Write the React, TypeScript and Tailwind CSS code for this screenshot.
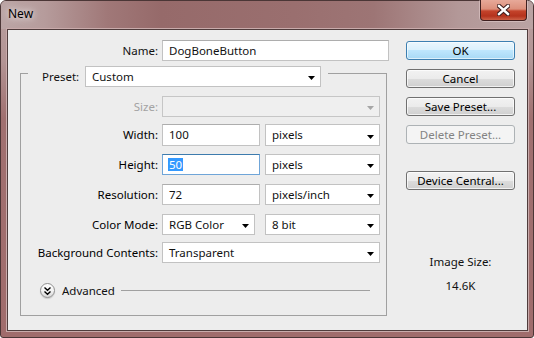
import React from "react";

function Arrow({ disabled }: { disabled?: boolean }) {
  return (
    <svg width="7" height="4" viewBox="0 0 7 4" className="mt-[3px] shrink-0">
      <polygon points="0,0 7,0 3.5,4" fill={disabled ? "#a6a6a6" : "#000"} />
    </svg>
  );
}

function TextBox({ children, className }: { children?: React.ReactNode; className: string }) {
  return (
    <div
      className={`h-full flex items-center pl-[6px] bg-white border border-[#c2c2c2] border-t-[#adadad] ${className}`}
    >
      {children}
    </div>
  );
}

function Select({
  children,
  className,
  disabled,
}: {
  children?: React.ReactNode;
  className: string;
  disabled?: boolean;
}) {
  return (
    <div
      className={`h-full flex items-center justify-between pl-[6px] pr-[5px] border ${
        disabled ? "bg-[#efefef] border-[#c6c6c6]" : "bg-white border-[#c2c2c2]"
      } ${className}`}
    >
      <span>{children}</span>
      <Arrow disabled={disabled} />
    </div>
  );
}

function Btn({ children, kind }: { children: React.ReactNode; kind?: "default" | "disabled" }) {
  const base = "h-[19px] w-[109px] rounded-[3px] border flex items-center justify-center leading-none";
  if (kind === "default")
    return (
      <div
        className={`${base} border-[#3c7fb1] bg-[linear-gradient(#eaf6fd_0%,#d9f0fc_50%,#bee6fd_50%,#a7d9f5_100%)] shadow-[inset_0_0_0_1px_rgba(255,255,255,0.6)] text-black`}
      >
        {children}
      </div>
    );
  if (kind === "disabled")
    return (
      <div className={`${base} border-[#adb2b5] bg-[#f4f4f4] text-[#838383]`}>{children}</div>
    );
  return (
    <div
      className={`${base} border-[#707070] bg-[linear-gradient(#f2f2f2_0%,#ebebeb_50%,#dddddd_50%,#cfcfcf_100%)] shadow-[inset_0_0_0_1px_rgba(255,255,255,0.7)] text-black`}
    >
      {children}
    </div>
  );
}

function Row({
  label,
  mt,
  h,
  disabled,
  children,
}: {
  label: string;
  mt: string;
  h: string;
  disabled?: boolean;
  children: React.ReactNode;
}) {
  return (
    <div className={`flex items-center ${mt} ${h}`}>
      <div className={`w-[137px] text-right whitespace-nowrap ${disabled ? "text-[#a3a3a3]" : "text-black"}`}>{label}</div>
      <div className="ml-[4px] flex h-full">{children}</div>
    </div>
  );
}

export default function App() {
  return (
    <div className="w-[534px] h-[338px] overflow-hidden font-['Noto_Sans',sans-serif] text-[11.5px] leading-[14px] text-[#111]">
      <div className="w-[534px] h-[338px] border border-[#4b3636] rounded-t-[6px] rounded-b-[3px] bg-[linear-gradient(180deg,#b9a0a0_0%,#b39494_18%,#a07070_35%,#a06c6c_100%)] flex flex-col">
        {/* title bar */}
        <div className="h-[28px] flex items-start justify-between bg-[linear-gradient(90deg,#bba5a5_0%,#b69c9c_8%,#a07878_20%,#966a6a_30%,#9a6f6f_55%,#9d7575_70%,#b39898_86%,#baa3a3_100%)] rounded-t-[5px]">
          <div className="pl-[7px] pt-[5px] font-['Noto_Sans',sans-serif] text-[12px] leading-[16px] text-black [text-shadow:0_0_6px_rgba(255,255,255,0.9),0_0_12px_rgba(255,255,255,0.6)]">
            New
          </div>
          <div className="-mt-[1px] mr-[6px] w-[47px] h-[21px] rounded-b-[4px] border border-[#3f1f1f] border-t-0 bg-[linear-gradient(#e7a999_0%,#dc8f7b_45%,#c4432b_55%,#b5331d_80%,#cc6147_100%)] shadow-[0_0_0_1px_rgba(255,235,235,0.35)] flex items-center justify-center">
            <svg width="13" height="12" viewBox="0 0 13 12">
              <path d="M2 2 L11 10 M11 2 L2 10" stroke="#3a1a1a" strokeWidth="4.4" strokeLinecap="square" />
              <path d="M2 2 L11 10 M11 2 L2 10" stroke="#ffffff" strokeWidth="2.4" strokeLinecap="square" />
            </svg>
          </div>
        </div>

        {/* client area */}
        <div className="ml-[6px] w-[521px] h-[302px] border border-[#4f3c3c] bg-[#ededed] shadow-[0_0_0_1px_#c9abab] flex">
          {/* left column */}
          <div className="w-[390px] flex flex-col">
            <div className="mt-[10px] h-[21px] flex items-center">
              <div className="w-[150px] text-right">Name:</div>
              <div className="ml-[4px] h-full flex">
                <TextBox className="w-[227px]">DogBoneButton</TextBox>
              </div>
            </div>

            {/* group box */}
            <div className="mt-[12px] ml-[12px] w-[367px] h-[243px] border border-[#a0a0a0] flex flex-col">
              <div className="-mt-[8px] h-[21px] flex">
                <div className="ml-[7px] pl-[14px] pr-[7px] bg-[#ededed] flex items-center h-full">
                  <div className="w-[43px]">Preset:</div>
                  <Select className="w-[236px]">Custom</Select>
                </div>
              </div>

              <Row label="Size:" mt="mt-[9px]" h="h-[21px]" disabled>
                <Select className="w-[218px]" disabled></Select>
              </Row>

              <Row label="Width:" mt="mt-[7px]" h="h-[22px]">
                <TextBox className="w-[98px]">100</TextBox>
                <Select className="ml-[5px] w-[115px]">pixels</Select>
              </Row>

              <Row label="Height:" mt="mt-[8px]" h="h-[21px]">
                <div className="w-[98px] h-full flex items-center pl-[5px] bg-white border border-[#6fa5d8] border-t-[#3d7bad]">
                  <span className="bg-[#3399ff] text-white px-[1px] leading-[13px]">50</span>
                </div>
                <Select className="ml-[5px] w-[115px]">pixels</Select>
              </Row>

              <Row label="Resolution:" mt="mt-[9px]" h="h-[21px]">
                <TextBox className="w-[98px]">72</TextBox>
                <Select className="ml-[5px] w-[115px]">pixels/inch</Select>
              </Row>

              <Row label="Color Mode:" mt="mt-[9px]" h="h-[21px]">
                <Select className="w-[93px]">RGB Color</Select>
                <Select className="ml-[10px] w-[115px]">8 bit</Select>
              </Row>

              <Row label="Background Contents:" mt="mt-[7px]" h="h-[21px]">
                <Select className="w-[218px]">Transparent</Select>
              </Row>

              <div className="mt-[20px] h-[15px] flex items-center">
                <div className="ml-[19px] w-[15px] h-[15px] rounded-full border border-[#8f8f8f] bg-[linear-gradient(#ffffff_0%,#f3f3f3_50%,#d9d9d9_100%)] shadow-[0_1px_1px_rgba(0,0,0,0.15)] flex items-center justify-center">
                  <svg width="9" height="10" viewBox="0 0 9 10">
                    <path d="M1.5 1.5 L4.5 4.2 L7.5 1.5 M1.5 5.5 L4.5 8.2 L7.5 5.5" fill="none" stroke="#000" strokeWidth="1.4" />
                  </svg>
                </div>
                <div className="ml-[7px]">Advanced</div>
                <div className="ml-[6px] mr-[16px] flex-1 h-[1px] bg-[#a0a0a0] -mt-[1px]" />
              </div>
            </div>
          </div>

          {/* right column */}
          <div className="pl-[8px] flex flex-col">
            <div className="mt-[11px]">
              <Btn kind="default">OK</Btn>
            </div>
            <div className="mt-[9px]">
              <Btn>Cancel</Btn>
            </div>
            <div className="mt-[9px]">
              <Btn>Save Preset...</Btn>
            </div>
            <div className="mt-[9px]">
              <Btn kind="disabled">Delete Preset...</Btn>
            </div>
            <div className="mt-[27px]">
              <Btn>Device Central...</Btn>
            </div>
            <div className="mt-[65px] w-[109px] text-center">Image Size:</div>
            <div className="mt-[10px] w-[109px] text-center">14.6K</div>
          </div>
        </div>
      </div>
    </div>
  );
}
